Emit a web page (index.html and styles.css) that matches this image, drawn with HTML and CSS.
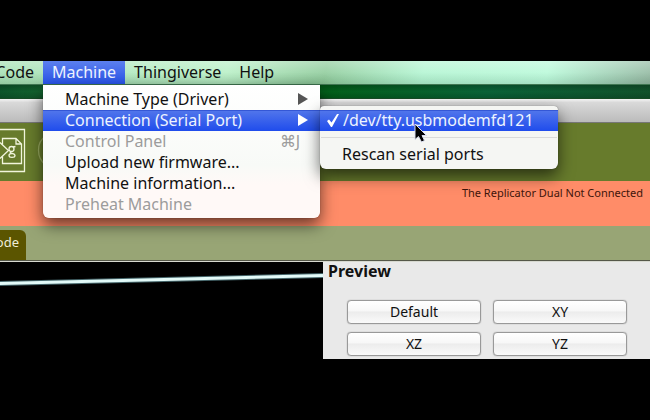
FILE: index.html
```html
<!DOCTYPE html>
<html lang="en">
<head>
<meta charset="utf-8">
<title>Machine menu</title>
<link rel="stylesheet" href="styles.css">
</head>
<body>
<main class="screen">
  <nav class="menubar" aria-label="Menu bar">
    <div class="clip"><button class="menu-title">Code</button></div>
    <div class="menu-holder">
      <button class="menu-title open">Machine</button>
      <div class="menu">
        <button class="item">Machine Type (Driver)<svg class="arrow" viewBox="0 0 10 12"><path d="M0 0L10 6L0 12Z"/></svg></button>
        <div class="sub-holder">
          <button class="item selected">Connection (Serial Port)<svg class="arrow" viewBox="0 0 10 12"><path d="M0 0L10 6L0 12Z"/></svg></button>
          <div class="menu submenu">
            <button class="item selected"><svg class="check" viewBox="0 0 12 13"><path d="M0 7L2 5.500L4.500 8.500L10 0H12L5 13H4Z"/></svg><span class="port">/dev/tty.usbmodemfd121</span></button>
            <hr>
            <button class="item rescan">Rescan serial ports</button>
            <svg class="pointer" viewBox="0 0 14 20"><path d="M1 1V16.500L4.500 13.500L7.500 19L10.500 17.500L8 12.500H12.500Z" fill="#000" stroke="#d8dcec" stroke-width="1"/></svg>
          </div>
        </div>
        <button class="item" disabled>Control Panel<span>⌘J</span></button>
        <button class="item">Upload new firmware...</button>
        <button class="item">Machine information...</button>
        <button class="item" disabled>Preheat Machine</button>
      </div>
    </div>
    <button class="menu-title">Thingiverse</button>
    <button class="menu-title">Help</button>
  </nav>
  <div class="desktop"></div>
  <div class="titlebar"></div>
  <div class="toolbar">
    <button class="tool" aria-label="Generate G-code"><svg viewBox="0 0 60 58" fill="none" stroke="#f1f5dc" stroke-width="1.300"><path d="M0 6.500H24.500V48.500H0M0 19.500L8.500 27.500L0 35.500"/><path d="M2.500 21.500V15.500H16L21.500 21V40.500H2.500V33.500M16 15.500V21H21.500"/><circle cx="11.500" cy="26" r="2.500"/><path d="M13 24L15.500 23.500M10.500 28.500C9 31 15 29.500 15 32.500C15 35 9 35 9 32.500C9 31.500 10 30.500 12 30.500"/><path d="M46 13C36 19 36 35 46 42" stroke="#95a65e"/></svg></button>
  </div>
  <div class="status">The Replicator Dual Not Connected</div>
  <div class="tabs"><button class="tab"><span>Code</span></button></div>
  <div class="workspace">
    <svg class="view" viewBox="0 0 323 97" preserveAspectRatio="none"><path d="M0 21.500L323 13.500" stroke="#45656a" stroke-width="5"/><path d="M0 21.500L323 13.500" stroke="#e2faf8" stroke-width="3"/></svg>
    <section class="preview">
      <h1>Preview</h1>
      <div class="buttons"><button>Default</button><button>XY</button><button>XZ</button><button>YZ</button></div>
    </section>
  </div>
</main>
</body>
</html>
```
FILE: styles.css
```css
* { box-sizing: border-box; }
body { margin: 0; background: #000; color: #111; font-family: "Noto Sans", sans-serif; overflow: hidden; }
button { margin: 0; padding: 0; border: 0; background: none; color: inherit; font: inherit; white-space: nowrap; }
.screen { padding: 61px 0; }
.menubar { display: flex; height: 24px; font-size: 16px; line-height: 23px; background: linear-gradient(#ffffff55, #ffffff22 50%, #00000018), linear-gradient(100deg, #a3dfb1, #b6efc4 35%, #8dcb9a 50%, #b1f5d1 65%, #b7f9d8 84%, #90b79f); border-bottom: 1px solid #407652; }
.clip { display: flex; justify-content: flex-end; width: 43px; overflow: hidden; }
.menu-title { display: block; height: 23px; padding: 0 9px; }
.menu-title.open { background: linear-gradient(#5c80ee, #2852e7); color: #eef3ff; }
.menu-holder, .sub-holder { position: relative; }
.menu { position: absolute; z-index: 2; top: 24px; left: 0; width: 277px; padding: 4px 0 3px; background: linear-gradient(#fff, #f8faf7 60%, #fff9f7 75%); border-radius: 0 0 6px 6px; box-shadow: 0 7px 16px #0009, 0 0 1px #0008; }
.item { display: flex; align-items: center; justify-content: space-between; width: 100%; height: 21px; padding: 0 20px 1px 22px; font-size: 16px; line-height: 20px; text-align: left; }
.item:disabled { color: #9c9c9c; }
.item.selected { background: linear-gradient(#5377eb, #1f4cec); box-shadow: inset 0 1px #3457d6; color: #edf3ff; }
.arrow { width: 10px; height: 12px; margin-right: -8px; fill: #555; }
.selected .arrow { fill: #fff; }
.submenu { top: -4px; left: 277px; width: 238px; padding: 4px 0; background: #f5f6f3; border-radius: 4px 4px 6px 6px; }
.submenu .item { justify-content: flex-start; gap: 4px; padding-left: 7px; }
.submenu .rescan { padding-left: 22px; }
.check { width: 12px; height: 13px; fill: #fff; }
hr { height: 1px; margin: 6px 1px; border: 0; background: #dadada; }
.pointer { position: absolute; top: 17px; left: 94px; width: 14px; height: 20px; }
.desktop { height: 14px; background: linear-gradient(#0003, #0000 50%, #0002), linear-gradient(90deg, #0c552a, #176b31 10%, #02601a 50%, #0a6237 75%, #11522b); border-bottom: 1px solid #174b25; }
.titlebar { height: 24px; background: linear-gradient(#f5f5f5, #d9d9d9 15%, #bbb); border-bottom: 1px solid #777; }
.toolbar { height: 58px; background: #677b2c; }
.tool { display: block; height: 58px; }
.tool svg { display: block; width: 60px; height: 58px; }
.status { height: 45px; padding: 4px 7px; background: #ff8c68; color: #41150b; font-size: 11px; line-height: 16px; text-align: right; }
.tabs { display: flex; align-items: flex-end; height: 35px; background: #98a575; border-bottom: 1px solid #555849; }
.tab { display: flex; justify-content: flex-end; width: 26px; height: 30px; padding: 0 7px 5px 0; overflow: hidden; background: #5b5500; border-radius: 0 6px 0 0; color: #eeedda; font-size: 13px; line-height: 25px; }
.workspace { display: flex; height: 98px; border-top: 1px solid #d7d9d0; }
.view { flex: 323; min-width: 0; height: 97px; background: #000; }
.preview { flex: 327; min-width: 0; background: #e9e9e9; }
h1 { margin: 0; padding: 0 5px; font-size: 16px; line-height: 18px; }
.buttons { display: grid; grid-template-columns: 1fr 1fr; gap: 8px 12px; padding: 20px 23px 0 24px; }
.buttons button { height: 24px; border: 1px solid #999; border-radius: 4px; background: linear-gradient(#fff, #f7f7f7 45%, #ececec 50%, #fafafa); box-shadow: 0 0 1px #777; font-size: 14px; line-height: 20px; }
```
